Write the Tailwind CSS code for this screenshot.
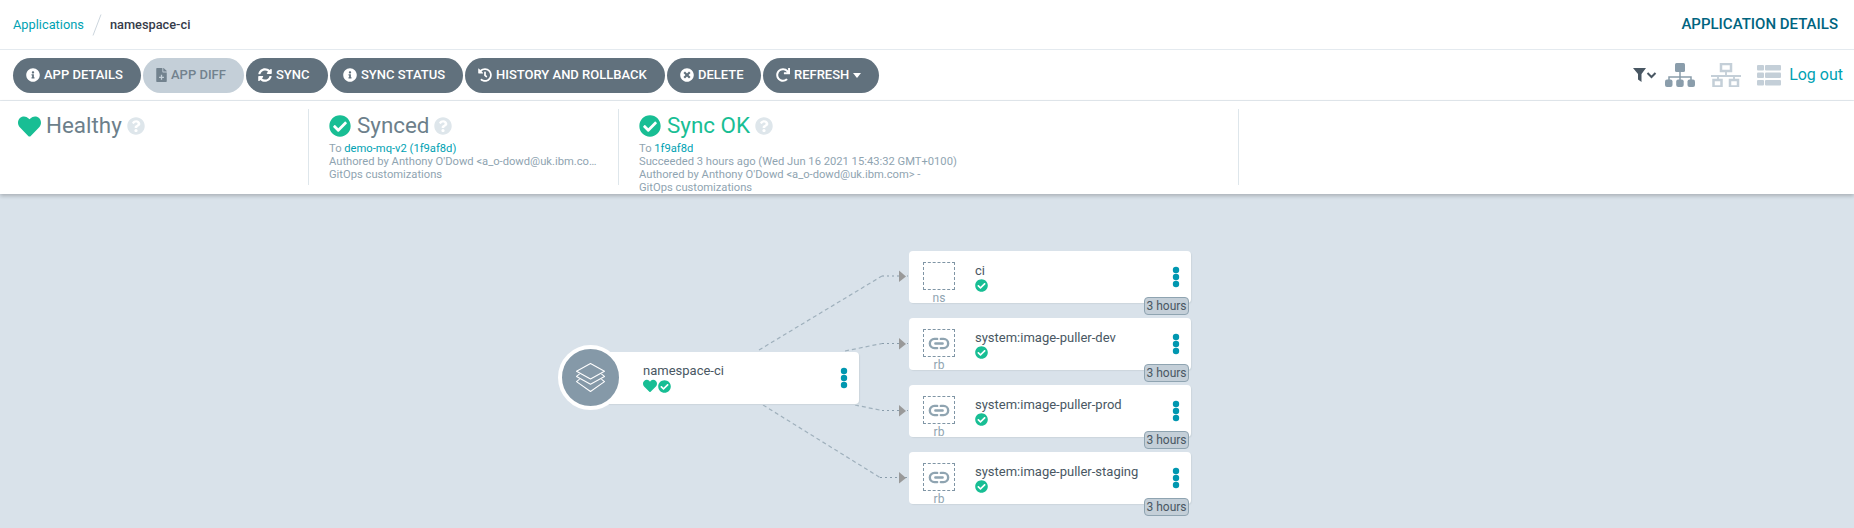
<!DOCTYPE html>
<html lang="en">

<head>
  <meta charset="UTF-8">
  <title>namespace-ci - Application details</title>
  <script src="https://cdn.jsdelivr.net/npm/@tailwindcss/browser@4"></script>
</head>

<body class="h-[528px] overflow-hidden flex flex-col bg-[#d9e2ea] font-['Roboto',sans-serif]">
  <!-- icon set -->
  <svg class="hidden">
    <symbol id="check" viewBox="0 0 512 512"><path d="M504 256c0 136.967-111.033 248-248 248S8 392.967 8 256 119.033 8 256 8s248 111.033 248 248zM227.314 387.314l184-184c6.248-6.248 6.248-16.379 0-22.627l-22.627-22.627c-6.248-6.249-16.379-6.249-22.628 0L216 308.118l-70.059-70.059c-6.248-6.248-16.379-6.248-22.628 0l-22.627 22.627c-6.248 6.248-6.248 16.379 0 22.627l104 104c6.249 6.249 16.379 6.249 22.628.001z"/></symbol>
    <symbol id="heart" viewBox="0 0 512 512"><path d="M462.3 62.6C407.5 15.9 326 24.3 275.7 76.2L256 96.5l-19.7-20.3C186.1 24.3 104.5 15.9 49.7 62.6c-62.8 53.6-66.1 149.8-9.9 207.9l193.5 199.8c12.5 12.9 32.8 12.9 45.3 0l193.5-199.8c56.3-58.1 53-154.3-9.8-207.9z"/></symbol>
    <symbol id="question" viewBox="0 0 512 512"><path d="M504 256c0 136.997-111.043 248-248 248S8 392.997 8 256C8 119.083 119.043 8 256 8s248 111.083 248 248zM262.655 90c-54.497 0-89.255 22.957-116.549 63.758-3.536 5.286-2.353 12.415 2.715 16.258l34.699 26.31c5.205 3.947 12.621 3.008 16.665-2.122 17.864-22.658 30.113-35.797 57.303-35.797 20.429 0 45.698 13.148 45.698 32.958 0 14.976-12.363 22.667-32.534 33.976C247.128 238.528 216 254.941 216 296v4c0 6.627 5.373 12 12 12h56c6.627 0 12-5.373 12-12v-1.333c0-28.462 83.186-29.647 83.186-106.667 0-58.002-60.165-102-116.531-102zM256 338c-25.365 0-46 20.635-46 46 0 25.364 20.635 46 46 46s46-20.636 46-46c0-25.365-20.635-46-46-46z"/></symbol>
    <symbol id="info" viewBox="0 0 512 512"><path d="M256 8C119.043 8 8 119.083 8 256c0 136.997 111.043 248 248 248s248-111.003 248-248C504 119.083 392.957 8 256 8zm0 110c23.196 0 42 18.804 42 42s-18.804 42-42 42-42-18.804-42-42 18.804-42 42-42zm56 254c0 6.627-5.373 12-12 12h-88c-6.627 0-12-5.373-12-12v-24c0-6.627 5.373-12 12-12h12v-64h-12c-6.627 0-12-5.373-12-12v-24c0-6.627 5.373-12 12-12h64c6.627 0 12 5.373 12 12v100h12c6.627 0 12 5.373 12 12v24z"/></symbol>
    <symbol id="times" viewBox="0 0 512 512"><path d="M256 8C119 8 8 119 8 256s111 248 248 248 248-111 248-248S393 8 256 8zm121.6 313.1c4.7 4.7 4.7 12.3 0 17L338 377.6c-4.7 4.7-12.3 4.7-17 0L256 312l-65.1 65.6c-4.7 4.7-12.3 4.7-17 0L134.4 338c-4.7-4.7-4.7-12.3 0-17l65.6-65-65.6-65.1c-4.7-4.7-4.7-12.3 0-17l39.6-39.6c4.7-4.7 12.3-4.7 17 0l65 65.7 65.1-65.6c4.7-4.7 12.3-4.7 17 0l39.6 39.6c4.7 4.7 4.7 12.3 0 17L312 256l65.6 65.1z"/></symbol>
    <symbol id="sync" viewBox="0 0 512 512"><path d="M370.72 133.28C339.458 104.008 298.888 87.962 255.848 88c-77.458.068-144.328 53.178-162.791 126.85-1.344 5.363-6.122 9.15-11.651 9.15H24.103c-7.498 0-13.194-6.807-11.807-14.176C33.933 94.924 134.813 8 256 8c66.448 0 126.791 26.136 171.315 68.685L463.03 40.97C478.149 25.851 504 36.559 504 57.941V192c0 13.255-10.745 24-24 24H345.941c-21.382 0-32.09-25.851-16.971-40.971l41.75-41.749zM32 296h134.059c21.382 0 32.09 25.851 16.971 40.971l-41.75 41.75c31.262 29.273 71.835 45.319 114.876 45.28 77.418-.07 144.315-53.144 162.787-126.849 1.344-5.363 6.122-9.15 11.651-9.15h57.304c7.498 0 13.194 6.807 11.807 14.176C478.067 417.076 377.187 504 256 504c-66.448 0-126.791-26.136-171.315-68.685L48.97 471.03C33.851 486.149 8 475.441 8 454.059V320c0-13.255 10.745-24 24-24z"/></symbol>
    <symbol id="redo" viewBox="0 0 512 512"><path d="M500.33 0h-47.41a12 12 0 0 0-12 12.57l4 82.76A247.42 247.42 0 0 0 256 8C119.34 8 7.9 119.53 8 256.19 8.1 393.07 119.1 504 256 504a247.1 247.1 0 0 0 166.18-63.91 12 12 0 0 0 .48-17.43l-34-34a12 12 0 0 0-16.38-.55A176 176 0 1 1 402.1 157.8l-101.53-4.87a12 12 0 0 0-12.57 12v47.41a12 12 0 0 0 12 12h200.33a12 12 0 0 0 12-12V12a12 12 0 0 0-12-12z"/></symbol>
    <symbol id="history" viewBox="0 0 512 512"><path d="M504 255.531c.253 136.64-111.18 248.372-247.82 248.468-59.015.042-113.223-20.53-155.822-54.911-11.077-8.94-11.905-25.541-1.839-35.607l11.267-11.267c8.609-8.609 22.353-9.551 31.891-1.984C173.062 425.135 212.781 440 256 440c101.705 0 184-82.311 184-184 0-101.705-82.311-184-184-184-48.814 0-93.149 18.969-126.068 49.932l50.754 50.754c10.08 10.08 2.941 27.314-11.313 27.314H24c-8.837 0-16-7.163-16-16V38.627c0-14.254 17.234-21.393 27.314-11.314l49.372 49.372C129.209 34.136 189.552 8 256 8c136.81 0 247.747 110.78 248 247.531zm-180.912 78.784l9.823-12.63c8.138-10.463 6.253-25.542-4.21-33.679L288 256.349V152c0-13.255-10.745-24-24-24h-16c-13.255 0-24 10.745-24 24v135.651l65.409 50.874c10.463 8.137 25.541 6.253 33.679-4.21z"/></symbol>
    <symbol id="filediff" viewBox="0 0 384 512"><path fill-rule="evenodd" d="M224 136V0H24C10.7 0 0 10.7 0 24v464c0 13.3 10.7 24 24 24h336c13.3 0 24-10.7 24-24V160H248c-13.2 0-24-10.8-24-24zM168 250h48v66h66v48h-66v66h-48v-66h-66v-48h66zM384 122v6H256V0h6c6.400 0 12.500 2.500 17 7l98 98c4.500 4.500 7 10.600 7 17z"/></symbol>
    <symbol id="link" viewBox="0 0 24 14"><path d="M10 2H7a5 5 0 0 0 0 10h3M14 2h3a5 5 0 0 1 0 10h-3M8 7h8" fill="none" stroke="currentColor" stroke-width="2.6" stroke-linecap="round"/></symbol>
    <symbol id="dots" viewBox="0 0 8 22"><circle cx="4" cy="4" r="3.2"/><circle cx="4" cy="11" r="3.2"/><circle cx="4" cy="18" r="3.2"/></symbol>
  </svg>

  <!-- top bar -->
  <div class="h-[50px] shrink-0 bg-white border-b border-[#e4eaef] flex items-center justify-between pl-[13px] pr-4">
    <div class="flex items-center text-[12.8px]">
      <a class="text-[#00a2b3]">Applications</a>
      <svg class="w-[10px] h-[22px] mx-[8px]" viewBox="0 0 10 22"><path d="M1 21.500L9 .5" stroke="#ccd6dd" fill="none"/></svg>
      <span class="font-medium text-[#363c4a]">namespace-ci</span>
    </div>
    <h1 class="text-[15px] font-medium text-[#00647f]">APPLICATION DETAILS</h1>
  </div>

  <!-- toolbar -->
  <div class="h-[51px] shrink-0 bg-white border-b border-[#e4eaef] flex items-center justify-between pl-[13px] pr-[11px]">
    <div class="flex items-center gap-[2px] text-[13px] font-medium text-white">
      <button class="h-[35px] w-[128px] pl-[13px] rounded-full bg-[#61717d] flex items-center gap-[4px]"><svg class="size-[14px] fill-current"><use href="#info"/></svg>APP DETAILS</button>
      <button class="h-[35px] w-[101px] pl-[13px] rounded-full bg-[#c4cfd8] text-[#72828e] flex items-center gap-[4px]"><svg class="w-[11px] h-[14px] fill-current"><use href="#filediff"/></svg>APP DIFF</button>
      <button class="h-[35px] w-[82px] pl-[12px] rounded-full bg-[#61717d] flex items-center gap-[4px]"><svg class="size-[14px] fill-current"><use href="#sync"/></svg>SYNC</button>
      <button class="h-[35px] w-[133px] pl-[13px] rounded-full bg-[#61717d] flex items-center gap-[4px]"><svg class="size-[14px] fill-current"><use href="#info"/></svg>SYNC STATUS</button>
      <button class="h-[35px] w-[200px] pl-[13px] rounded-full bg-[#61717d] flex items-center gap-[4px]"><svg class="size-[14px] fill-current"><use href="#history"/></svg>HISTORY AND ROLLBACK</button>
      <button class="h-[35px] w-[94px] pl-[13px] rounded-full bg-[#61717d] flex items-center gap-[4px]"><svg class="size-[14px] fill-current"><use href="#times"/></svg>DELETE</button>
      <button class="h-[35px] w-[116px] pl-[13px] rounded-full bg-[#61717d] flex items-center gap-[4px]"><svg class="size-[14px] fill-current"><use href="#redo"/></svg>REFRESH<span class="w-0 h-0 border-x-[4px] border-x-transparent border-t-[5px] border-t-white"></span></button>
    </div>
    <div class="flex items-center">
      <svg class="w-[24px] h-[16px] mr-[8px]" viewBox="0 0 24 16">
        <path d="M0 1h13L8.500 7v8L5 12.500V7z" fill="#495763"/>
        <path d="M14.500 6l4 4 4-4" fill="none" stroke="#495763" stroke-width="2"/>
      </svg>
      <svg class="w-[30px] h-[24px] mr-[16px]" viewBox="0 0 30 24">
        <rect x="10" y="0" width="10" height="9" rx="1.500" fill="#8a9dab"/>
        <path d="M15 9v5M4 17v-3h22v3M15 14v3" fill="none" stroke="#8a9dab" stroke-width="1.500"/>
        <rect x="0" y="16.500" width="7.500" height="7.500" rx="2" fill="#8a9dab"/>
        <rect x="11.200" y="16.500" width="7.500" height="7.500" rx="2" fill="#8a9dab"/>
        <rect x="22.500" y="16.500" width="7.500" height="7.500" rx="2" fill="#8a9dab"/>
      </svg>
      <svg class="w-[30px] h-[24px] mr-[16px]" viewBox="0 0 30 24" fill="none" stroke="#c4cfd8" stroke-width="2">
        <rect x="10" y="1" width="10" height="7" stroke-width="2.500"/>
        <path d="M15 8v5M0 13h30M7 13v4M23 13v4" stroke-width="1.800"/>
        <rect x="2.500" y="17" width="8" height="6.500" stroke-width="2.500"/>
        <rect x="19" y="17" width="8" height="6.500" stroke-width="2.500"/>
      </svg>
      <svg class="w-[24px] h-[21px] mr-[8px]" viewBox="0 0 24 21" fill="#c4cfd8">
        <rect x="0" y="0" width="7" height="5.500" rx="1"/><rect x="8" y="0" width="16" height="5.500" rx="1"/>
        <rect x="0" y="7.500" width="7" height="5.500" rx="1"/><rect x="8" y="7.500" width="16" height="5.500" rx="1"/>
        <rect x="0" y="15" width="7" height="5.500" rx="1"/><rect x="8" y="15" width="16" height="5.500" rx="1"/>
      </svg>
      <a class="text-base text-[#00a2b3]">Log out</a>
    </div>
  </div>

  <!-- status panel -->
  <div class="relative z-10 h-[93px] shrink-0 bg-white overflow-hidden shadow-[0_2px_4px_rgba(0,0,0,0.22)] flex py-[8px] text-[11.2px] leading-[13.3px] text-[#8fa4b1]">
    <div class="w-[308px] shrink-0 pl-[18px]">
      <div class="flex items-center h-[24px] mt-[5px] text-[22.4px] text-[#6d7f8b]">
        <svg class="size-[23px] fill-[#18be94] mr-[5px]"><use href="#heart"/></svg>Healthy
        <svg class="size-[18px] fill-[#dee6eb] ml-[5px]"><use href="#question"/></svg>
      </div>
    </div>
    <div class="w-[310px] shrink-0 border-l border-[#dee6eb] pl-[20px] h-[76px]">
      <div class="flex items-center h-[24px] mt-[5px] text-[22.4px] text-[#6d7f8b]">
        <svg class="size-[22px] fill-[#18be94] mr-[6px]"><use href="#check"/></svg>Synced
        <svg class="size-[18px] fill-[#dee6eb] ml-[5px]"><use href="#question"/></svg>
      </div>
      <div class="mt-[3.500px]">To <a class="text-[#00a2b3]">demo-mq-v2 (1f9af8d)</a></div>
      <div>Authored by Anthony O'Dowd &lt;a_o-dowd@uk.ibm.co…</div>
      <div>GitOps customizations</div>
    </div>
    <div class="w-[621px] shrink-0 border-x border-[#dee6eb] pl-[20px] h-[76px]">
      <div class="flex items-center h-[24px] mt-[5px] text-[22.4px] text-[#18be94]">
        <svg class="size-[22px] fill-[#18be94] mr-[6px]"><use href="#check"/></svg>Sync OK
        <svg class="size-[18px] fill-[#dee6eb] ml-[5px]"><use href="#question"/></svg>
      </div>
      <div class="mt-[3.500px]">To <a class="text-[#00a2b3]">1f9af8d</a></div>
      <div>Succeeded 3 hours ago (Wed Jun 16 2021 15:43:32 GMT+0100)</div>
      <div>Authored by Anthony O'Dowd &lt;a_o-dowd@uk.ibm.com&gt; -</div>
      <div>GitOps customizations</div>
    </div>
  </div>

  <!-- resource tree: nodes sit at their own places on the canvas -->
  <div class="relative flex-1">
    <svg class="absolute inset-0 w-full h-full" fill="none" stroke-width="1.200">
      <g stroke="#9fb0bc" stroke-dasharray="4 3">
        <path d="M759 156L882 82"/>
        <path d="M845 157L882 149.500"/>
        <path d="M855 211L882 216.500"/>
        <path d="M763 211L880 283.500"/>
      </g>
      <g stroke="#8a9dab" stroke-width="1" stroke-dasharray="2 3">
        <path d="M882 82H908"/>
        <path d="M882 149.500H908"/>
        <path d="M882 216.500H908"/>
        <path d="M880 283.500H908"/>
      </g>
      <g fill="#999" stroke="none">
        <path d="M899 76.500l7 6-7 5.500z"/>
        <path d="M899 144l7 6-7 5.500z"/>
        <path d="M899 211l7 6-7 5.500z"/>
        <path d="M899 278l7 6-7 5.500z"/>
      </g>
    </svg>

    <!-- app node -->
    <div class="absolute left-[590px] top-[158px] w-[269px] h-[52px] bg-white rounded-[4px] shadow-[1px_1px_1px_#ccd6dd]">
      <div class="pl-[53px] pt-[11px] text-[13px] leading-[15px] text-[#495763]">namespace-ci
        <div class="flex items-center gap-[1px] mt-[1px]">
          <svg class="size-[14px] fill-[#18be94]"><use href="#heart"/></svg>
          <svg class="size-[13px] fill-[#18be94]"><use href="#check"/></svg>
        </div>
      </div>
      <svg class="absolute right-[11.500px] top-[15px] w-[8px] h-[22px] fill-[#0097b0]"><use href="#dots"/></svg>
    </div>
    <div class="absolute left-[558px] top-[151px] size-[65px] rounded-full bg-[#8599a8] border-4 border-white flex items-center justify-center">
      <svg class="size-[29px]" viewBox="0 0 28 28" fill="none" stroke="#fff" stroke-width="1" stroke-linejoin="round">
        <path d="M14 .5L27.500 8 14 15.500.5 8z"/>
        <path d="M3.500 10.500L.5 13 14 20.500 27.500 13l-3-2.500"/>
        <path d="M3.500 15.500L.5 18 14 27.500 27.500 18l-3-2.500"/>
      </svg>
    </div>

    <!-- ns -->
    <div class="absolute left-[909px] top-[57px] w-[282px] h-[52px] bg-white rounded-[4px] shadow-[1px_1px_1px_#ccd6dd]">
      <div class="absolute left-[14px] top-[11px] w-[32px] h-[28px] border border-dashed border-[#7f95a5]"></div>
      <div class="absolute left-[14px] top-[40px] w-[32px] text-center text-xs leading-[14px] text-[#8fa4b1]">ns</div>
      <div class="pl-[66px] pt-[12px] text-[13px] leading-[15px] text-[#495763]">ci
        <svg class="size-[13px] mt-[1px] fill-[#18be94]"><use href="#check"/></svg>
      </div>
      <svg class="absolute right-[11px] top-[15px] w-[8px] h-[22px] fill-[#0097b0]"><use href="#dots"/></svg>
      <div class="absolute right-[2px] top-[46px] w-[45px] h-[18px] rounded-[4px] bg-[#c4cfd8] border border-[#8fa4b1] text-center text-xs leading-[16px] text-[#495763]">3 hours</div>
    </div>

    <!-- rb nodes -->
    <div class="absolute left-[909px] top-[124px] w-[282px] h-[52px] bg-white rounded-[4px] shadow-[1px_1px_1px_#ccd6dd]">
      <div class="absolute left-[14px] top-[11px] w-[32px] h-[28px] border border-dashed border-[#7f95a5] flex items-center justify-center"><svg class="w-[22px] h-[13px] text-[#8fa4b1]"><use href="#link"/></svg></div>
      <div class="absolute left-[14px] top-[40px] w-[32px] text-center text-xs leading-[14px] text-[#8fa4b1]">rb</div>
      <div class="pl-[66px] pt-[12px] text-[13px] leading-[15px] text-[#495763]">system:image-puller-dev
        <svg class="size-[13px] mt-[1px] fill-[#18be94]"><use href="#check"/></svg>
      </div>
      <svg class="absolute right-[11px] top-[15px] w-[8px] h-[22px] fill-[#0097b0]"><use href="#dots"/></svg>
      <div class="absolute right-[2px] top-[46px] w-[45px] h-[18px] rounded-[4px] bg-[#c4cfd8] border border-[#8fa4b1] text-center text-xs leading-[16px] text-[#495763]">3 hours</div>
    </div>
    <div class="absolute left-[909px] top-[191px] w-[282px] h-[52px] bg-white rounded-[4px] shadow-[1px_1px_1px_#ccd6dd]">
      <div class="absolute left-[14px] top-[11px] w-[32px] h-[28px] border border-dashed border-[#7f95a5] flex items-center justify-center"><svg class="w-[22px] h-[13px] text-[#8fa4b1]"><use href="#link"/></svg></div>
      <div class="absolute left-[14px] top-[40px] w-[32px] text-center text-xs leading-[14px] text-[#8fa4b1]">rb</div>
      <div class="pl-[66px] pt-[12px] text-[13px] leading-[15px] text-[#495763]">system:image-puller-prod
        <svg class="size-[13px] mt-[1px] fill-[#18be94]"><use href="#check"/></svg>
      </div>
      <svg class="absolute right-[11px] top-[15px] w-[8px] h-[22px] fill-[#0097b0]"><use href="#dots"/></svg>
      <div class="absolute right-[2px] top-[46px] w-[45px] h-[18px] rounded-[4px] bg-[#c4cfd8] border border-[#8fa4b1] text-center text-xs leading-[16px] text-[#495763]">3 hours</div>
    </div>
    <div class="absolute left-[909px] top-[258px] w-[282px] h-[52px] bg-white rounded-[4px] shadow-[1px_1px_1px_#ccd6dd]">
      <div class="absolute left-[14px] top-[11px] w-[32px] h-[28px] border border-dashed border-[#7f95a5] flex items-center justify-center"><svg class="w-[22px] h-[13px] text-[#8fa4b1]"><use href="#link"/></svg></div>
      <div class="absolute left-[14px] top-[40px] w-[32px] text-center text-xs leading-[14px] text-[#8fa4b1]">rb</div>
      <div class="pl-[66px] pt-[12px] text-[13px] leading-[15px] text-[#495763]">system:image-puller-staging
        <svg class="size-[13px] mt-[1px] fill-[#18be94]"><use href="#check"/></svg>
      </div>
      <svg class="absolute right-[11px] top-[15px] w-[8px] h-[22px] fill-[#0097b0]"><use href="#dots"/></svg>
      <div class="absolute right-[2px] top-[46px] w-[45px] h-[18px] rounded-[4px] bg-[#c4cfd8] border border-[#8fa4b1] text-center text-xs leading-[16px] text-[#495763]">3 hours</div>
    </div>
  </div>
</body>

</html>
